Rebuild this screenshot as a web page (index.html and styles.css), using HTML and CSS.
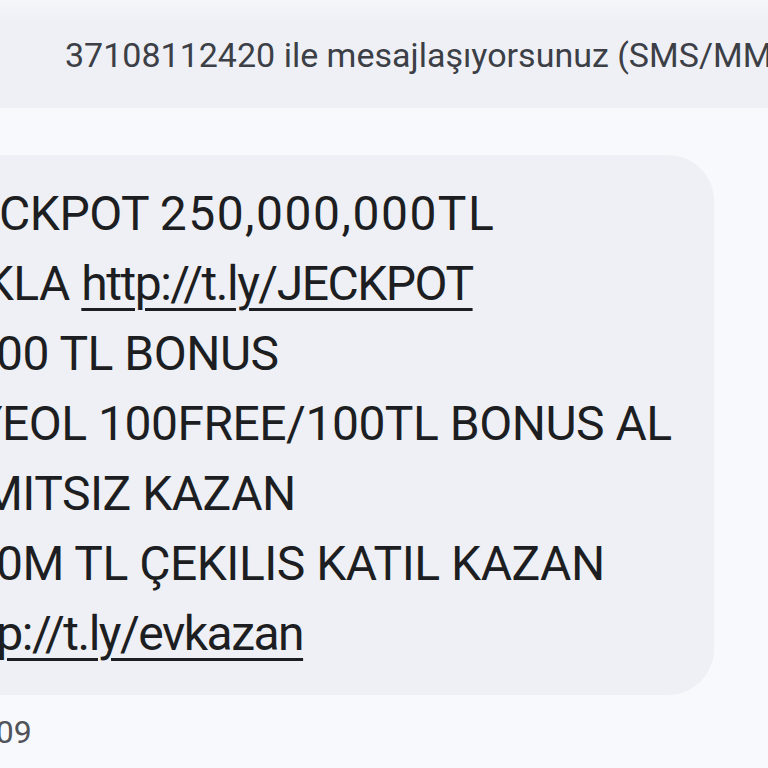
FILE: index.html
```html
<!DOCTYPE html>
<html lang="tr">
<head>
    <meta charset="UTF-8">
    <meta name="viewport" content="width=device-width, initial-scale=1.0">
    <title>Mesajlar</title>
    <link rel="stylesheet" href="styles.css">
</head>
<body>

    <!-- Conversation header -->
    <div class="topbar">
        <span class="topbar-text">37108112420 ile mesajlaşıyorsunuz (SMS/MMS)</span>
    </div>

    <!-- Messages -->
    <div class="thread">
        <div class="bubble">
            <p>JACKPOT <span class="amount">250,000,000TL</span></p>
            <p>TIKLA <a href="#">http://t.ly/JECKPOT</a></p>
            <p>1000 TL BONUS</p>
            <p>ÜYEOL 100FREE/100TL BONUS AL</p>
            <p>LIMITSIZ KAZAN</p>
            <p>100M TL ÇEKILIS KATIL KAZAN</p>
            <p><a href="#">http://t.ly/evkazan</a></p>
        </div>
        <div class="time">22:09</div>
    </div>

</body>
</html>
```

FILE: styles.css
```css
body {
    font-family: Roboto, "Liberation Sans", sans-serif;
    margin: 0;
    padding: 0;
    background-color: #f8f9fd;
    width: 768px;
    height: 768px;
    overflow: hidden;
}

/* Header */
.topbar {
    height: 108px;
    background: linear-gradient(#f5f6fa, #eef0f6 20%);
    display: flex;
    align-items: center;
    padding-left: 65px;
    overflow: hidden;
    white-space: nowrap;
}

.topbar-text {
    font-size: 34px;
    color: #3c3f46;
    padding-top: 2px;
}

/* Thread */
.thread {
    padding-top: 47px;
    margin-left: -100px;
}

.bubble {
    box-sizing: border-box;
    width: 814px;
    background-color: #eef0f5;
    border-radius: 46px;
    padding: 24px 0 26px 43px;
}

.bubble p {
    margin: 0;
    font-size: 48px;
    letter-spacing: -0.5px;
    line-height: 70px;
    color: #1d1e22;
    white-space: nowrap;
}

.bubble .amount {
    letter-spacing: 1.5px;
}

.bubble a {
    color: #1d1e22;
    letter-spacing: -1.5px;
    text-decoration: underline;
    text-decoration-thickness: 3px;
    text-underline-offset: 8px;
}

.time {
    padding: 18px 0 0 52px;
    font-size: 32px;
    color: #50535a;
}
```
